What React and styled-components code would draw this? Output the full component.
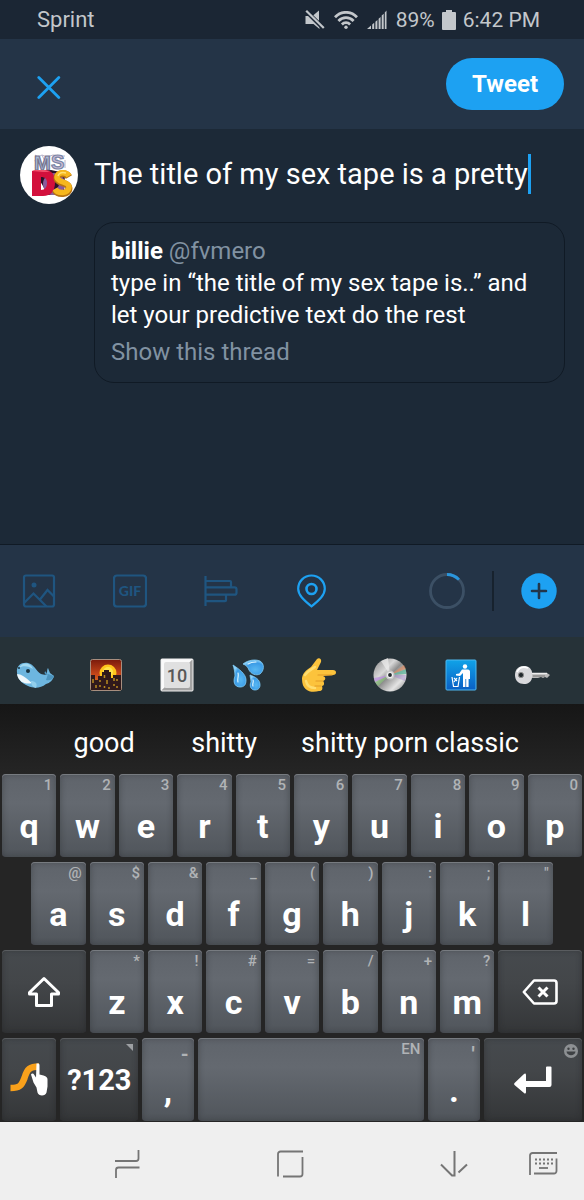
import React, { useState } from 'react'
import styled, { createGlobalStyle, css } from 'styled-components'

const topRow = [
  ['q', '1'], ['w', '2'], ['e', '3'], ['r', '4'], ['t', '5'],
  ['y', '6'], ['u', '7'], ['i', '8'], ['o', '9'], ['p', '0'],
]
const homeRow = [
  ['a', '@'], ['s', '$'], ['d', '&'], ['f', '_'], ['g', '('],
  ['h', ')'], ['j', ':'], ['k', ';'], ['l', '"'],
]
const lowRow = [
  ['z', '*'], ['x', '!'], ['c', '#'], ['v', '='], ['b', '/'], ['n', '+'], ['m', '?'],
]
const suggestions = ['good', 'shitty', 'shitty porn classic']

/* ---------- status bar icons ---------- */

const MutedIcon = () => (
  <svg width='20' height='20' viewBox='0 0 20 20' fill='#c3c7cb'>
    <path d='M.5 6h4.500L14.500 15v4L8.500 14H.500z' />
    <path d='M8 5.600L14 .5v10.500z' />
    <path d='M1.500 1.500L18.500 18.500' stroke='#1b2634' strokeWidth='4' />
    <path d='M1.200 .8L18.800 18' stroke='#c3c7cb' strokeWidth='2.200' />
  </svg>
)

const WifiIcon = () => (
  <svg width='24' height='18' viewBox='0 0 24 18' fill='none' stroke='#c3c7cb' strokeWidth='2.800'>
    <path d='M1 6.200C7.200-.3 16.800-.3 23 6.200' />
    <path d='M4.400 9.900c4.300-4.400 10.900-4.400 15.200 0' />
    <path d='M7.900 13.400c2.300-2.300 5.900-2.300 8.200 0' />
    <circle cx='12' cy='16.200' r='1.700' fill='#c3c7cb' stroke='none' />
  </svg>
)

const SignalIcon = () => (
  <svg width='20' height='20' viewBox='0 0 20 20' fill='#c3c7cb'>
    <path d='M0 19l4-3.500V19zM5.200 14.500l2-1.700V19h-2zM8.400 11.700l2-1.700v9h-2zM11.600 8.800l2-1.800v12h-2zM14.700 5.500l2-1.800V19h-2zM17.800 2.500l1.700-2V19h-1.700z' />
  </svg>
)

const BatteryIcon = () => (
  <svg width='14' height='20' viewBox='0 0 14 20' fill='#c3c7cb'>
    <path d='M4 0h6v2h3a1 1 0 0 1 1 1V19a1 1 0 0 1-1 1H1a1 1 0 0 1-1-1V3a1 1 0 0 1 1-1h3z' />
  </svg>
)

/* ---------- composer icons ---------- */

const CloseIcon = () => (
  <svg width='24' height='30' viewBox='0 0 24 30' fill='none' stroke='#1da1f2' strokeWidth='2.800' strokeLinecap='round'>
    <path d='M1.800 8.500l20 20M21.800 8.500l-20 20' />
  </svg>
)

const PhotoIcon = () => (
  <svg width='34' height='34' viewBox='0 0 34 34' fill='none' stroke='#1f5580' strokeWidth='2.200'>
    <rect x='2' y='1.500' width='30' height='31' rx='2' />
    <circle cx='12' cy='11' r='2.500' fill='#1f5580' stroke='none' />
    <path d='M2 29l9.500-9.500L24.500 32.500M18 25.500l7.500-9.500 6.500 6.500' />
  </svg>
)

const GifIcon = () => (
  <svg width='34' height='34' viewBox='0 0 34 34'>
    <rect x='1' y='1.500' width='32' height='31' rx='3' fill='none' stroke='#1f5580' strokeWidth='2.200' />
    <text x='17' y='22' textAnchor='middle' fill='#1f5580' fontFamily='Lato' fontWeight='900' fontSize='14'>GIF</text>
  </svg>
)

const PollIcon = () => (
  <svg width='34' height='34' viewBox='0 0 34 34' fill='none' stroke='#1f5580' strokeWidth='2.200'>
    <path d='M1.500 2v30M1.500 7H26a1 1 0 0 1 1 1v5.300M1.500 13.300h29a2 2 0 0 1 2 2v3.400a2 2 0 0 1-2 2h-29M22 20.700v5.500a1 1 0 0 1-1 1H1.500' />
  </svg>
)

const PinIcon = () => (
  <svg width='34' height='34' viewBox='0 0 34 34' fill='none' stroke='#1da1f2' strokeWidth='2.200'>
    <path d='M16.500 32.300C8.500 26 3.200 21 3.200 14.800a13.300 13.300 0 0 1 26.600 0C29.800 21 24.500 26 16.500 32.300z' />
    <circle cx='16.500' cy='15' r='5' strokeWidth='2.600' />
  </svg>
)

const CountRing = ({ used }) => (
  <svg width='36' height='36' viewBox='0 0 36 36' fill='none' strokeWidth='2.800'>
    <circle cx='18' cy='18' r='16.500' stroke='#3c5065' />
    <circle cx='18' cy='18' r='16.500' stroke='#2a96dd' pathLength='280' strokeDasharray={`${used} 280`} transform='rotate(-90 18 18)' />
  </svg>
)

const PlusIcon = () => (
  <svg width='36' height='36' viewBox='0 0 36 36'>
    <circle cx='18' cy='18' r='17.700' fill='#1da1f2' />
    <path d='M18 11v14M11 18h14' stroke='#22364b' strokeWidth='2.600' strokeLinecap='round' />
  </svg>
)

const AvatarArt = () => (
  <svg width='58' height='58' viewBox='0 0 58 58' role='img' aria-label='MS DOS'>
    <circle cx='29' cy='29' r='29' fill='#fff' />
    <path d='M15 9l3 2 4-2 5 2 6-2 6 1 6 0M15 14l2 8M45 14l0 8M22 9l6 13M34 9l8 12' stroke='#b9b4cb' strokeWidth='1' fill='none' />
    <g fontFamily='Liberation Sans' fontWeight='700' fontSize='20' strokeWidth='1.200'>
      <text x='14' y='24' fill='#a9bcd8' stroke='#77748f'>M</text>
      <text x='31' y='23' fill='#cabbd6' stroke='#7a86a5'>S</text>
    </g>
    <path d='M15 26l16-2 14 3-1 20-16 2z' fill='#2b1228' />
    <circle cx='34' cy='38' r='8' fill='none' stroke='#8b5a9c' strokeWidth='6' />
    <path d='M12 25l4-1h9c6 0 10 4 10 12 0 9-4 14-12 14H12zM21 31v13c4 0 6-3 6-7s-2-6-6-6z' fill='#d3103c' fillRule='evenodd' />
    <path d='M12 25l4-1h9l5 2-7 0z' fill='#f0506c' />
    <path d='M49 31c-3-5-12-4-12 1 0 6 12 4 12 10 0 7-11 7-14 2' fill='none' stroke='#b87412' strokeWidth='7' />
    <path d='M49 30c-3-5-12-4-12 1 0 6 12 4 12 10 0 7-11 7-14 2' fill='none' stroke='#f6b71d' strokeWidth='5.500' />
    <path d='M46 27c-4-1-7 0-8 3' fill='none' stroke='#ffe173' strokeWidth='1.500' />
  </svg>
)

/* ---------- emoji ---------- */

const Whale = () => (
  <svg width='38' height='36' viewBox='0 0 38 36'>
    <path d='M1 16C0 8 6 5 12 6c6 1 8 8 13 11 3 1 5 1 6 0 0-2 0-5 1-6l2 5 4 3c-1 4-4 7-8 8-6 5-13 4-18 2C5 26 2 22 1 16z' fill='#6db6df' />
    <path d='M3 11C6 5 14 5 17 12c-4-3-10-4-14-1z' fill='#a3d9f1' />
    <path d='M1 17c4 0 8 3 15 9-6 2-14-1-15-9z' fill='#eef7fb' />
    <path d='M15 24c4 0 7 2 5 7-4-1-5-4-5-7z' fill='#92cfec' />
    <path d='M29 17c-1-2 0-3 1-2l2 3zM32 17l6 2c-1 4-5 5-8 4z' fill='#4d94bd' />
    <circle cx='12' cy='14' r='2' fill='#173240' />
    <circle cx='3' cy='11' r='1' fill='#173240' />
  </svg>
)

const CitySunset = () => (
  <svg width='32' height='32' viewBox='0 0 32 32'>
    <defs>
      <linearGradient id='dusk' x2='0' y2='1'>
        <stop offset='0' stopColor='#7a1a0c' />
        <stop offset='.5' stopColor='#c9481a' />
        <stop offset='1' stopColor='#e98b26' />
      </linearGradient>
    </defs>
    <rect x='.5' y='.5' width='31' height='31' rx='2' fill='url(#dusk)' stroke='#a78e7f' />
    <circle cx='18' cy='14' r='8.500' fill='#ffc51c' />
    <circle cx='18' cy='13' r='5' fill='#ffe34a' />
    <path d='M1 16h4v5h3v-4h4v-4h2v-2h5v2h2v6h2v-3h8v15H1z' fill='#30191b' />
    <path d='M3 20v4M10 21v2M10 26v2M14.500 16v3M17 21v4M14.500 27v2M19 28v2M24 19v3M27 20v2M24 25v2M27 27v2M6 26v3' stroke='#b88b20' strokeWidth='1.500' />
  </svg>
)

const KeycapTen = () => (
  <svg width='34' height='34' viewBox='0 0 34 34'>
    <rect x='1' y='1' width='32' height='32' rx='1' fill='#c4c4c4' />
    <path d='M1 1h32l-4 4H5v24l-4 4z' fill='#fafafa' />
    <path d='M33 1v32H1l4-4h24V5z' fill='#a3a3a3' />
    <rect x='1' y='1' width='32' height='32' rx='1' fill='none' stroke='#eee' />
    <rect x='4' y='4' width='26' height='26' rx='2' fill='#e0e0e0' />
    <text x='17' y='24' textAnchor='middle' fontFamily='Roboto' fontWeight='500' fontSize='18' fill='#585858'>10</text>
  </svg>
)

const Droplets = () => (
  <svg width='34' height='34' viewBox='0 0 34 34'>
    <defs>
      <radialGradient id='drop' cx='.6' cy='.65' r='.65'>
        <stop offset='0' stopColor='#58b8f2' />
        <stop offset='.7' stopColor='#3b9be6' />
        <stop offset='1' stopColor='#8ed3fa' />
      </radialGradient>
    </defs>
    <g fill='url(#drop)' stroke='#7fcdf7' strokeWidth='.8'>
      <path d='M12 6c5-4 12-5 17-3 5 3 4 10 0 13-4 2-9 0-11-4-1-3-3-5-6-6z' />
      <path d='M2 7c6 4 13 9 13 15 0 5-2 7-6 7-6 0-7-6-5-11 0-4-1-8-2-11z' />
      <path d='M19 17c5 2 10 4 10 10 0 4-3 5-5 5-4 0-6-4-4-8 0-3-1-5-1-7z' />
    </g>
    <path d='M17 6c3-2 6-2 8-2M7 15c1 3-1 6 0 9M22 22c1 2-1 4 0 6' fill='none' stroke='#d8f3ff' strokeWidth='1.200' strokeLinecap='round' />
  </svg>
)

const PointRight = () => (
  <svg width='36' height='36' viewBox='0 0 36 36'>
    <path d='M1 22c0-5 4-9 9-12l6-8c2-2 5 0 4 3l-4 8h16c4 0 4 5 0 5l-10 1c3 1 3 4 0 5 2 2 1 5-1 5 1 3 0 5-3 5-7 2-17 1-17-12z' fill='#fcc33c' />
    <path d='M4 18c3-4 7-6 10-8M5 24c1 5 5 7 9 7' fill='none' stroke='#ffdd6f' strokeWidth='2.500' strokeLinecap='round' />
    <path d='M17 18l14 0M15 24h7M14 29l6 0' fill='none' stroke='#e29b27' strokeWidth='1.200' strokeLinecap='round' />
  </svg>
)

const Disc = () => (
  <svg width='34' height='34' viewBox='0 0 34 34'>
    <defs>
      <linearGradient id='disc' x1='0' y1='0' x2='1' y2='1'>
        <stop offset='0' stopColor='#858585' />
        <stop offset='.35' stopColor='#d8d8d8' />
        <stop offset='.5' stopColor='#8e8e8e' />
        <stop offset='.75' stopColor='#e4e4e4' />
        <stop offset='1' stopColor='#777' />
      </linearGradient>
    </defs>
    <circle cx='17' cy='17' r='16.500' fill='url(#disc)' />
    <path d='M17 17L8 3l7-3z' fill='#eee' opacity='.7' />
    <path d='M17 17l16-6v5z' fill='#55b79b' opacity='.7' />
    <path d='M17 17L31 7l2 4z' fill='#e0885c' opacity='.6' />
    <path d='M17 17L1 20l1 4z' fill='#b98be0' opacity='.7' />
    <path d='M17 17L2 24l3 4z' fill='#7fc06e' opacity='.6' />
    <path d='M17 17l16 0-1 6z' fill='#9b7ad0' opacity='.4' />
    <circle cx='17' cy='17' r='4.500' fill='#c9c9c9' />
    <circle cx='17' cy='17' r='2.500' fill='#232a2e' stroke='#f2f2f2' strokeWidth='1.200' />
  </svg>
)

const LitterSign = () => (
  <svg width='32' height='32' viewBox='0 0 32 32'>
    <defs>
      <linearGradient id='sign' x2='0' y2='1'>
        <stop offset='0' stopColor='#10a3e8' />
        <stop offset='1' stopColor='#0a5fc4' />
      </linearGradient>
    </defs>
    <rect x='1' y='1' width='30' height='30' rx='1' fill='url(#sign)' stroke='#4fb8ef' />
    <g fill='#fff'>
      <circle cx='20' cy='7.500' r='2.200' />
      <path d='M17 10.500h6c1 0 2 1 2 2V20h-1.400v8h-2.400v-8h-.8v8h-2.400V14l-3 3-4-.5V15l3.200-.4z' />
    </g>
    <path d='M7 18l1.500 9.500h4.500l1.500-9.500M9 19l3 3M12 19l-3 4' fill='none' stroke='#fff' strokeWidth='1.200' />
  </svg>
)

const KeyEmoji = () => (
  <svg width='36' height='34' viewBox='0 0 36 34'>
    <path d='M16 15h17l3 2-3 3-2-1-2 1-2-1-3 1H16z' fill='#b9b9b9' />
    <path d='M17 15.500h16' stroke='#eee' strokeWidth='1.500' />
    <path d='M19 18h12' stroke='#777' strokeWidth='1' />
    <path d='M1 17c0-6 4-9 9-9 4 0 7 2 8 6v6c-1 4-4 6-8 6-5 0-9-3-9-9z' fill='#d9d9dc' />
    <path d='M3 14c2-4 6-6 11-4' fill='none' stroke='#fff' strokeWidth='1.600' />
    <circle cx='7' cy='17' r='2.600' fill='#22292d' stroke='#8b8b8b' />
  </svg>
)

/* ---------- keyboard icons ---------- */

const ShiftIcon = () => (
  <svg width='34' height='32' viewBox='0 0 34 32' fill='none' stroke='#fff' strokeWidth='3' strokeLinejoin='round'>
    <path d='M17 2.500L2.500 16.500v1.500h7v11.500h15V18h7v-1.500z' />
  </svg>
)

const BackspaceIcon = () => (
  <svg width='36' height='26' viewBox='0 0 36 26' fill='none' stroke='#fff' strokeWidth='2.600' strokeLinejoin='round'>
    <path d='M12 1.500h20a2.500 2.500 0 0 1 2.500 2.500v18a2.500 2.500 0 0 1-2.500 2.500H12L1.800 13z' />
    <path d='M16.500 8.500l9 9M25.500 8.500l-9 9' strokeWidth='3' />
  </svg>
)

const SwypeIcon = () => (
  <svg width='38' height='36' viewBox='0 0 38 36'>
    <path d='M.5 26c9 0 11-2 14-10C17 7 20 4.500 29 4.500' fill='none' stroke='#f9a11b' strokeWidth='6.500' />
    <path d='M26.500 1.500h1.800c1 0 1.200 1 1.200 2v9l4 1c3 1 4 2 4 4v7l-1 6c-1 4-8 4-9 0l-1-5-3-5-2.500-8c.5-1.500 2.500-1.500 3 0l2 3z' fill='#fff' />
  </svg>
)

const EnterIcon = () => (
  <svg width='38' height='28' viewBox='0 0 38 28' fill='#fff'>
    <path d='M33 .5h3.500a1 1 0 0 1 1 1V19a2 2 0 0 1-2 2H12v5c0 1.500-1 2-2 1L.800 19.200c-1-1-1-1.400 0-2.400L10 8c1-1 2-.5 2 1v6h20V1.500a1 1 0 0 1 1-1z' />
  </svg>
)

const SmileIcon = () => (
  <svg width='14' height='14' viewBox='0 0 14 14'>
    <circle cx='7' cy='7' r='7' fill='#8d9093' />
    <circle cx='4.500' cy='4.800' r='1.200' fill='#3e4144' />
    <circle cx='9.500' cy='4.800' r='1.200' fill='#3e4144' />
    <path d='M2.500 7.500h9c-.5 5-8.500 5-9 0z' fill='#3e4144' />
  </svg>
)

const CornerIcon = () => (
  <svg width='8' height='8' viewBox='0 0 8 8'>
    <path d='M0 0h7v7z' fill='#9da0a3' />
  </svg>
)

/* ---------- navigation icons ---------- */

const RecentsIcon = () => (
  <svg width='26' height='30' viewBox='0 0 26 30' fill='none' stroke='#757575' strokeWidth='1.800'>
    <path d='M1 12h21a2.500 2.500 0 0 0 2.500-2.500V1M25.500 18.500H4.500A2.500 2.500 0 0 0 2 21v8' />
  </svg>
)

const HomeIcon = () => (
  <svg width='28' height='28' viewBox='0 0 28 28' fill='none' stroke='#757575' strokeWidth='1.800'>
    <path d='M2 26.500V4a2.500 2.500 0 0 1 2.500-2.500H27M26.500 7v17a2.500 2.500 0 0 1-2.500 2.500H7' />
  </svg>
)

const DownIcon = () => (
  <svg width='28' height='26' viewBox='0 0 28 26' fill='none' stroke='#757575' strokeWidth='2'>
    <path d='M1 13.500l11 11h2.500V0M18.500 21.500l8.500-8' />
  </svg>
)

const KeyboardIcon = () => (
  <svg width='30' height='24' viewBox='0 0 30 24' fill='none' stroke='#757575' strokeWidth='1.800'>
    <path d='M2 23V3.500A2.500 2.500 0 0 1 4.500 1H29M28.500 6.500V19a2.500 2.500 0 0 1-2.500 2.500H6' />
    <path d='M7 7.500h18M7 11.500h18' strokeWidth='2' strokeDasharray='2 2' />
    <path d='M11 16h9' />
  </svg>
)

const emojis = [
  ['whale', Whale], ['city sunset', CitySunset], ['keycap 10', KeycapTen], ['droplets', Droplets],
  ['pointing right', PointRight], ['disc', Disc], ['litter in bin', LitterSign], ['key', KeyEmoji],
]

const LetterKey = ({ letter, hint, start }) => (
  <Key type='button' $start={start}>
    <Hint>{hint}</Hint>
    <Letter>{letter}</Letter>
  </Key>
)

const App = () => {
  const [text, setText] = useState('The title of my sex tape is a pretty')

  return (
    <Screen>
      <GlobalStyle />
      <StatusBar>
        <span>Sprint</span>
        <StatusIcons>
          <MutedIcon />
          <WifiIcon />
          <SignalIcon />
          <Battery>
            89%
            <BatteryIcon />
            6:42 PM
          </Battery>
        </StatusIcons>
      </StatusBar>

      <Header>
        <IconButton type='button' aria-label='Close'>
          <CloseIcon />
        </IconButton>
        <TweetButton type='button'>Tweet</TweetButton>
      </Header>

      <Composer>
        <AvatarArt />
        <Draft>
          <InputLine>
            <TweetInput
              type='text'
              aria-label='Tweet text'
              value={text}
              onChange={(e) => setText(e.target.value)}
            />
            <Caret />
          </InputLine>
          <Quote>
            <p>
              <strong>billie</strong> <Muted>@fvmero</Muted>
            </p>
            <p>type in “the title of my sex tape is..” and let your predictive text do the rest</p>
            <ThreadLink href='#thread'>Show this thread</ThreadLink>
          </Quote>
        </Draft>
      </Composer>

      <Toolbar>
        <ToolGroup $gap='57px'>
          <IconButton type='button' aria-label='Photo'><PhotoIcon /></IconButton>
          <IconButton type='button' aria-label='GIF'><GifIcon /></IconButton>
          <IconButton type='button' aria-label='Poll'><PollIcon /></IconButton>
          <IconButton type='button' aria-label='Location'><PinIcon /></IconButton>
        </ToolGroup>
        <ToolGroup $gap='27px'>
          <CountRing used={text.length} />
          <Divider />
          <IconButton type='button' aria-label='Add tweet'><PlusIcon /></IconButton>
        </ToolGroup>
      </Toolbar>

      <EmojiBar>
        {emojis.map(([name, Emoji]) => (
          <IconButton type='button' key={name} aria-label={name}>
            <Emoji />
          </IconButton>
        ))}
      </EmojiBar>

      <Suggestions>
        {suggestions.map((word) => (
          <Suggestion type='button' key={word}>{word}</Suggestion>
        ))}
      </Suggestions>

      <Keyboard>
        <KeyGrid>
          {topRow.map(([letter, hint]) => (
            <LetterKey key={letter} letter={letter} hint={hint} />
          ))}
          {homeRow.map(([letter, hint], i) => (
            <LetterKey key={letter} letter={letter} hint={hint} start={i === 0 ? 2 : undefined} />
          ))}
          <Key type='button' aria-label='Shift' $dark $span={3} $start={1}><ShiftIcon /></Key>
          {lowRow.map(([letter, hint]) => (
            <LetterKey key={letter} letter={letter} hint={hint} />
          ))}
          <Key type='button' aria-label='Backspace' $dark $span={3}><BackspaceIcon /></Key>
        </KeyGrid>
        <BottomKeys>
          <Key type='button' aria-label='Swype' $dark><SwypeIcon /></Key>
          <Key type='button' $dark>
            <Hint><CornerIcon /></Hint>
            <Symbols>?123</Symbols>
          </Key>
          <Key type='button'>
            <Hint $low>-</Hint>
            <Letter>,</Letter>
          </Key>
          <Key type='button' aria-label='Space'>
            <Hint>EN</Hint>
          </Key>
          <Key type='button'>
            <Hint $low>'</Hint>
            <Letter>.</Letter>
          </Key>
          <Key type='button' aria-label='Enter' $dark>
            <Hint><SmileIcon /></Hint>
            <EnterIcon />
          </Key>
        </BottomKeys>
      </Keyboard>

      <NavBar>
        <NavGroup>
          <IconButton type='button' aria-label='Recents'><RecentsIcon /></IconButton>
          <IconButton type='button' aria-label='Home'><HomeIcon /></IconButton>
          <IconButton type='button' aria-label='Hide keyboard'><DownIcon /></IconButton>
        </NavGroup>
        <IconButton type='button' aria-label='Switch keyboard'><KeyboardIcon /></IconButton>
      </NavBar>
    </Screen>
  )
}

const GlobalStyle = createGlobalStyle`
  * {
    box-sizing: border-box;
  }
  body {
    margin: 0;
    background-color: #1c2937;
    font-family: Roboto, 'Liberation Sans', sans-serif;
  }
  p {
    margin: 0;
  }
  button {
    font-family: inherit;
    border: none;
    cursor: pointer;
  }
  svg {
    display: block;
    flex-shrink: 0;
  }
`
const Screen = styled.div`
  display: flex;
  flex-direction: column;
  min-height: 100vh;
`
const StatusBar = styled.div`
  display: flex;
  align-items: center;
  justify-content: space-between;
  height: 39px;
  padding: 0 44px 0 37px;
  background-color: #1b2634;
  color: #c3c7cb;
  font-size: 22px;
`
const StatusIcons = styled.div`
  display: flex;
  align-items: center;
  gap: 9px;
`
const Battery = styled.span`
  display: flex;
  align-items: center;
  gap: 7px;
  font-size: 21px;
`
const IconButton = styled.button`
  display: flex;
  align-items: center;
  justify-content: center;
  padding: 0;
  background: none;
`
const Header = styled.header`
  display: flex;
  align-items: center;
  justify-content: space-between;
  height: 90px;
  padding: 0 20px 0 37px;
  background-color: #243447;
`
const TweetButton = styled.button`
  height: 52px;
  padding: 0 26px;
  border-radius: 26px;
  background-color: #1da1f2;
  color: #fff;
  font-size: 24px;
  font-weight: 700;
`
const Composer = styled.main`
  display: flex;
  flex: 1;
  align-items: flex-start;
  gap: 16px;
  padding: 17px 19px 17px 20px;
`
const Draft = styled.div`
  display: flex;
  flex: 1;
  flex-direction: column;
  gap: 18px;
  min-width: 0;
`
const InputLine = styled.div`
  display: flex;
  align-items: center;
  height: 58px;
  padding-bottom: 2px;
`
const TweetInput = styled.input`
  field-sizing: content;
  max-width: 100%;
  height: 40px;
  padding: 0;
  border: none;
  outline: none;
  background: none;
  color: #fff;
  font-family: inherit;
  font-size: 29px;
`
const Caret = styled.span`
  flex-shrink: 0;
  width: 3px;
  height: 40px;
  background-color: #1da1f2;
`
const Quote = styled.article`
  display: flex;
  flex-direction: column;
  padding: 12px 16px 14px;
  border: 1px solid #101a25;
  border-radius: 20px;
  color: #fff;
  font-size: 24px;
  line-height: 32px;
`
const Muted = styled.span`
  color: #8192a2;
`
const ThreadLink = styled.a`
  margin-top: 5px;
  color: #8192a2;
  text-decoration: none;
`
const Toolbar = styled.div`
  display: flex;
  align-items: center;
  justify-content: space-between;
  height: 93px;
  padding: 0 27px 0 22px;
  border-top: 1px solid #101a25;
  background-color: #243447;
`
const ToolGroup = styled.div`
  display: flex;
  align-items: center;
  gap: ${({ $gap }) => $gap};
`
const Divider = styled.span`
  width: 2px;
  height: 40px;
  background-color: #17222e;
`
const EmojiBar = styled.div`
  display: grid;
  grid-template-columns: repeat(8, 1fr);
  height: 67px;
  padding: 8px 17px 0 0;
  background-color: #263238;
`
const Suggestions = styled.div`
  display: flex;
  justify-content: center;
  height: 70px;
  padding-right: 4px;
  background: linear-gradient(#161616, #252525);
`
const Suggestion = styled.button`
  min-width: 120px;
  padding: 8px 17px 0;
  background: none;
  color: #fff;
  font-size: 27px;
  white-space: nowrap;
`
const Keyboard = styled.div`
  display: flex;
  flex-direction: column;
  gap: 5px;
  padding: 0 2px 1px;
  background-color: #252525;
`
const KeyGrid = styled.div`
  display: grid;
  grid-template-columns: repeat(20, minmax(0, 1fr));
  gap: 5px 4px;
`
const BottomKeys = styled.div`
  display: grid;
  grid-template-columns: 54fr 78fr 51fr 226fr 51fr 98fr;
  gap: 4px;
`
const Key = styled.button`
  position: relative;
  display: flex;
  align-items: center;
  justify-content: center;
  min-width: 0;
  height: 83px;
  padding: 0;
  border-radius: 4px;
  background: linear-gradient(#5f646b, #646970 35%, #50555b);
  box-shadow: inset 0 1px 0 #777b80, inset 0 0 6px rgb(40 43 47 / 45%);
  color: #fff;
  ${({ $dark }) =>
    $dark &&
    css`
      background: linear-gradient(#464a4e, #434649 40%, #343638);
      box-shadow: inset 0 1px 0 #595c5f, inset 0 0 6px rgb(30 32 34 / 45%);
    `}
  ${KeyGrid} & {
    grid-column: ${({ $start, $span = 2 }) => `${$start || 'auto'} / span ${$span}`};
  }
`
const Hint = styled.span`
  position: absolute;
  top: 2px;
  right: 4px;
  color: #b0b3b6;
  font-size: 15px;
  font-weight: 500;
  line-height: 18px;
  ${({ $low }) =>
    $low &&
    css`
      right: 5px;
      font-size: 20px;
      font-weight: 700;
      line-height: 28px;
    `}
  svg {
    margin-top: 4px;
  }
`
const Letter = styled.span`
  padding-top: 20px;
  font-size: 34px;
  font-weight: 700;
  line-height: 40px;
`
const Symbols = styled.span`
  font-size: 29px;
  font-weight: 700;
`
const NavBar = styled.nav`
  display: flex;
  align-items: center;
  justify-content: space-between;
  height: 78px;
  padding: 5px 26px 0 114px;
  background-color: #efefef;
`
const NavGroup = styled.div`
  display: flex;
  align-items: center;
  gap: 136px;
`

export default App
